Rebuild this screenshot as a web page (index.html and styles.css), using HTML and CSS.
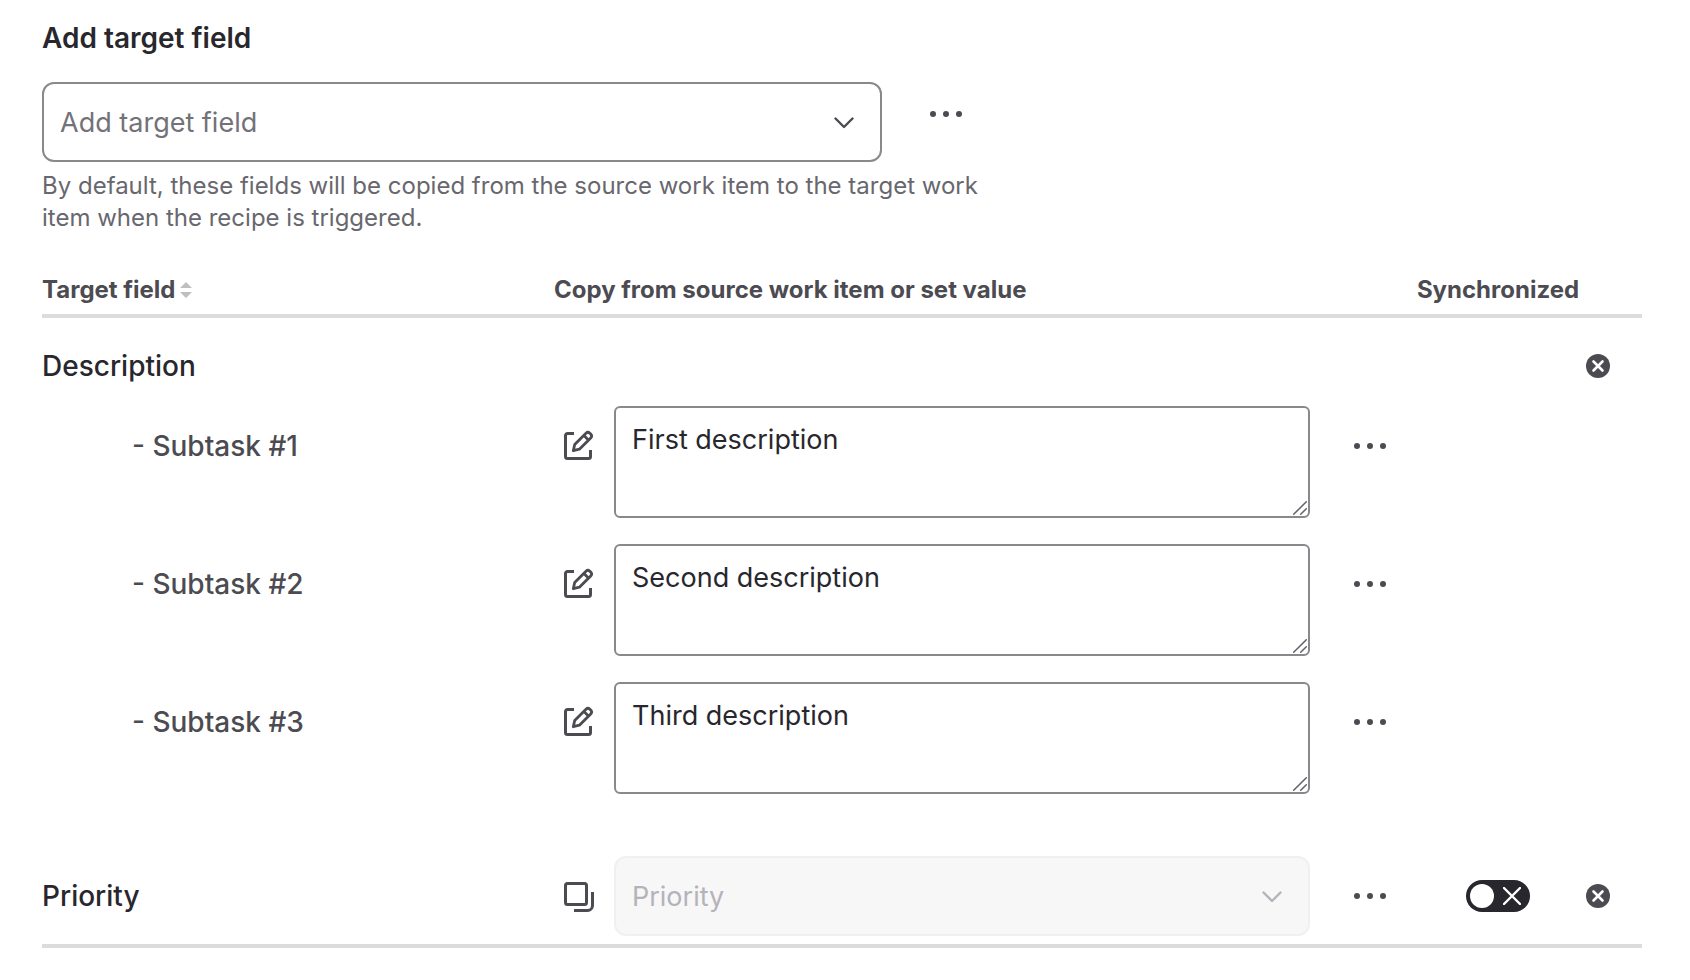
FILE: index.html
```html
<!DOCTYPE html>
<html lang="en">
<head>
    <meta charset="UTF-8">
    <meta name="viewport" content="width=device-width, initial-scale=1.0">
    <title>Add target field</title>
    <link rel="stylesheet" href="styles.css">
</head>
<body>
    <!-- Shared icons -->
    <svg class="icon-defs" aria-hidden="true">
        <symbol id="icon-chevron" viewBox="0 0 20 12">
            <path d="M1.500 1.500 10 10l8.500-8.500" fill="none" stroke="currentColor" stroke-width="2.400" stroke-linecap="round" stroke-linejoin="round"/>
        </symbol>
        <symbol id="icon-more" viewBox="0 0 32 32">
            <circle cx="3" cy="16" r="3"/>
            <circle cx="16" cy="16" r="3"/>
            <circle cx="29" cy="16" r="3"/>
        </symbol>
        <symbol id="icon-edit" viewBox="0 0 32 32">
            <path d="M12 3.500H5.500a2 2 0 0 0-2 2v21a2 2 0 0 0 2 2h21a2 2 0 0 0 2-2V20" fill="none" stroke="currentColor" stroke-width="3"/>
            <path d="M11.300 20.700l1.400-6.200L24 3.200a2.700 2.700 0 0 1 3.800 0l.9.900a2.700 2.700 0 0 1 0 3.800L17.400 19.200zM22 5.600l4.600 4.600" fill="none" stroke="currentColor" stroke-width="2.800" stroke-linejoin="round"/>
        </symbol>
        <symbol id="icon-copy" viewBox="0 0 32 32">
            <rect x="3.500" y="3.500" width="21" height="21" rx="2" fill="none" stroke="currentColor" stroke-width="3"/>
            <path d="M30.500 12v13.500a5 5 0 0 1-5 5H12" fill="none" stroke="currentColor" stroke-width="3"/>
        </symbol>
        <symbol id="icon-remove" viewBox="0 0 24 24">
            <circle cx="12" cy="12" r="12"/>
            <path d="M7.500 7.500l9 9M16.500 7.500l-9 9" fill="none" stroke="#fff" stroke-width="2.600" stroke-linecap="round"/>
        </symbol>
        <symbol id="icon-grip" viewBox="0 0 14 14">
            <path d="M.7 13.300 13.300.7M7.700 13.300l5.600-5.600" fill="none" stroke="currentColor" stroke-width="1.500" stroke-linecap="round"/>
        </symbol>
    </svg>

    <main class="page">
        <label class="title" for="targetField">Add target field</label>
        <div class="add-row">
            <div class="select">
                <select id="targetField">
                    <option>Add target field</option>
                </select>
                <svg class="chevron"><use href="#icon-chevron"/></svg>
            </div>
            <button class="icon-button more" type="button" aria-label="More options"><svg><use href="#icon-more"/></svg></button>
        </div>
        <p class="help">By default, these fields will be copied from the source work item to the target work item when the recipe is triggered.</p>

        <table class="fields">
            <colgroup>
                <col class="col-target">
                <col>
                <col class="col-sync">
                <col class="col-remove">
            </colgroup>
            <thead>
                <tr>
                    <th scope="col">
                        <span class="sortable">Target field
                            <svg class="sort" viewBox="0 0 12 16"><path d="M0 6l6-6 6 6zM0 10h12l-6 6z"/></svg>
                        </span>
                    </th>
                    <th scope="col">Copy from source work item or set value</th>
                    <th class="sync" scope="col">Synchronized</th>
                    <td></td>
                </tr>
            </thead>
            <tbody>
                <tr class="group">
                    <th scope="row">Description</th>
                    <td></td>
                    <td></td>
                    <td><button class="remove" type="button" aria-label="Remove Description"><svg><use href="#icon-remove"/></svg></button></td>
                </tr>
                <tr class="subtask">
                    <th scope="row"><label for="subtask1">- Subtask #1</label></th>
                    <td>
                        <div class="value">
                            <button class="icon-button" type="button" aria-label="Edit"><svg><use href="#icon-edit"/></svg></button>
                            <div class="text">
                                <textarea id="subtask1">First description</textarea>
                                <svg class="grip"><use href="#icon-grip"/></svg>
                            </div>
                            <button class="icon-button more" type="button" aria-label="More options"><svg><use href="#icon-more"/></svg></button>
                        </div>
                    </td>
                    <td></td>
                    <td></td>
                </tr>
                <tr class="subtask">
                    <th scope="row"><label for="subtask2">- Subtask #2</label></th>
                    <td>
                        <div class="value">
                            <button class="icon-button" type="button" aria-label="Edit"><svg><use href="#icon-edit"/></svg></button>
                            <div class="text">
                                <textarea id="subtask2">Second description</textarea>
                                <svg class="grip"><use href="#icon-grip"/></svg>
                            </div>
                            <button class="icon-button more" type="button" aria-label="More options"><svg><use href="#icon-more"/></svg></button>
                        </div>
                    </td>
                    <td></td>
                    <td></td>
                </tr>
                <tr class="subtask">
                    <th scope="row"><label for="subtask3">- Subtask #3</label></th>
                    <td>
                        <div class="value">
                            <button class="icon-button" type="button" aria-label="Edit"><svg><use href="#icon-edit"/></svg></button>
                            <div class="text">
                                <textarea id="subtask3">Third description</textarea>
                                <svg class="grip"><use href="#icon-grip"/></svg>
                            </div>
                            <button class="icon-button more" type="button" aria-label="More options"><svg><use href="#icon-more"/></svg></button>
                        </div>
                    </td>
                    <td></td>
                    <td></td>
                </tr>
                <tr class="single">
                    <th scope="row"><label for="priority">Priority</label></th>
                    <td>
                        <div class="value">
                            <button class="icon-button" type="button" aria-label="Copy"><svg><use href="#icon-copy"/></svg></button>
                            <div class="select">
                                <select id="priority" disabled>
                                    <option>Priority</option>
                                </select>
                                <svg class="chevron"><use href="#icon-chevron"/></svg>
                            </div>
                            <button class="icon-button more" type="button" aria-label="More options"><svg><use href="#icon-more"/></svg></button>
                        </div>
                    </td>
                    <td>
                        <label class="toggle">
                            <input type="checkbox" aria-label="Synchronized">
                            <svg viewBox="0 0 18 18"><path d="M1 1l16 16M17 1 1 17" fill="none" stroke="#fff" stroke-width="2.400" stroke-linecap="round"/></svg>
                        </label>
                    </td>
                    <td><button class="remove" type="button" aria-label="Remove Priority"><svg><use href="#icon-remove"/></svg></button></td>
                </tr>
            </tbody>
        </table>
    </main>
</body>
</html>
```
FILE: styles.css
```css
* {
    box-sizing: border-box;
}
body {
    margin: 0;
    background-color: #fff;
    color: #28272d;
    font-family: Inter, "Liberation Sans", sans-serif;
    font-size: 28px;
    line-height: 32px;
}
button, select, textarea {
    font: inherit;
    color: inherit;
}
.icon-defs {
    display: none;
}
.page {
    padding: 22px 48px 30px 42px;
}
.title {
    display: block;
    margin-bottom: 28px;
    font-weight: 600;
}
.add-row {
    display: flex;
    gap: 40px;
}
.add-row .select {
    flex: 0 1 840px;
}
.add-row .icon-button {
    height: 64px;
}

/* Controls */
.select {
    position: relative;
    flex: 1;
}
.select select {
    display: block;
    width: 100%;
    height: 80px;
    padding: 2px 60px 0 16px;
    border: 2px solid #89888d;
    border-radius: 12px;
    background-color: #fff;
    color: #737278;
    font-size: 27px;
    appearance: none;
}
.select select:disabled {
    border-color: #f0f0f0;
    background-color: #f7f7f7;
    color: #b4b3ba;
    opacity: 1;
}
.chevron {
    position: absolute;
    top: 35px;
    right: 28px;
    width: 20px;
    height: 12px;
    color: #4c4b51;
    pointer-events: none;
}
.select select:disabled + .chevron {
    color: #b4b3ba;
}
.icon-button, .remove {
    display: flex;
    align-items: center;
    justify-content: center;
    flex: none;
    padding: 0;
    border: none;
    background: none;
    color: #4c4b51;
    cursor: pointer;
}
.icon-button {
    width: 48px;
    height: 80px;
}
.icon-button svg {
    width: 32px;
    height: 32px;
    fill: currentColor;
}
.remove {
    width: 36px;
    height: 32px;
}
.remove svg {
    width: 24px;
    height: 24px;
    fill: currentColor;
}
.help {
    max-width: 960px;
    margin: 8px 0 40px;
    color: #68676e;
    font-size: 24px;
}

/* Fields table */
.fields {
    width: 100%;
    border-collapse: separate;
    border-spacing: 0;
    table-layout: fixed;
}
.fields th, .fields td {
    padding: 0;
    text-align: left;
    vertical-align: top;
}
.col-target {
    width: 32%;
}
.col-sync {
    width: 164px;
}
.col-remove {
    width: 62px;
}
.fields thead th, .fields thead td {
    padding-bottom: 8px;
    border-bottom: 4px solid #dcdcde;
    color: #4c4b51;
    font-size: 24px;
    font-weight: 700;
    white-space: nowrap;
}
.fields thead .sync {
    text-align: center;
}
.sortable {
    display: flex;
    align-items: center;
    gap: 4px;
}
.sort {
    width: 12px;
    height: 16px;
    fill: #bfbfc3;
}
.fields tbody th {
    font-weight: 500;
}
.fields .group th, .fields .group td {
    padding: 32px 0 24px;
}
.fields .subtask th {
    padding: 24px 0 0 90px;
    color: #4c4b51;
}
.fields .subtask td {
    padding-bottom: 26px;
}
.value {
    display: flex;
    align-items: flex-start;
    padding-right: 22px;
}
.value .icon-button {
    margin-right: 12px;
}
.value .more {
    margin: 0 0 0 36px;
}
.text {
    position: relative;
    flex: 1;
}
.text textarea {
    display: block;
    width: 100%;
    height: 112px;
    padding: 12px 16px;
    border: 2px solid #89888d;
    border-radius: 6px;
    font-size: 27px;
    line-height: 40px;
    resize: none;
}
.grip {
    position: absolute;
    right: 3px;
    bottom: 3px;
    width: 14px;
    height: 14px;
    color: #626168;
}
.fields .single th, .fields .single td {
    padding: 60px 0 32px;
    border-bottom: 4px solid #dcdcde;
}
.fields .single td:nth-child(2) {
    padding: 36px 0 8px;
}

/* Synchronized switch */
.toggle {
    position: relative;
    display: block;
    width: 64px;
    height: 32px;
    margin: 0 auto;
}
.toggle input {
    display: block;
    width: 64px;
    height: 32px;
    margin: 0;
    padding: 4px;
    border-radius: 16px;
    background-color: #28272d;
    appearance: none;
}
.toggle input::before {
    content: "";
    display: block;
    width: 24px;
    height: 24px;
    border-radius: 50%;
    background-color: #fff;
}
.toggle svg {
    position: absolute;
    top: 7px;
    right: 9px;
    width: 18px;
    height: 18px;
    pointer-events: none;
}
```
